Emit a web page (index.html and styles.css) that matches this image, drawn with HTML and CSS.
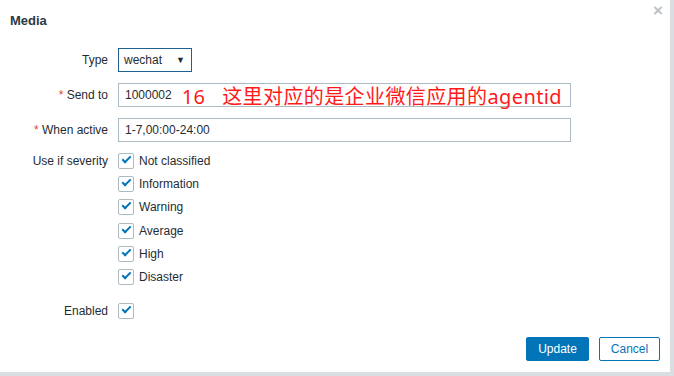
FILE: index.html
```html
<!DOCTYPE html>
<html lang="en">
<head>
  <meta charset="UTF-8">
  <title>Media</title>
  <link rel="stylesheet" href="styles.css">
</head>
<body>
  <div class="dialog">
    <div class="dialog-head">
      <h4>Media</h4>
      <span class="close">&times;</span>
    </div>

    <div class="form">
      <div class="row">
        <label>Type</label>
        <div class="select">wechat <span class="arrow">&#9660;</span></div>
      </div>
      <div class="row">
        <label><span class="req">*</span> Send to</label>
        <div class="input">1000002 <span class="note">16&nbsp;&nbsp;&nbsp;这里对应的是企业微信应用的agentid</span></div>
      </div>
      <div class="row">
        <label><span class="req">*</span> When active</label>
        <div class="input">1-7,00:00-24:00</div>
      </div>
      <div class="row top">
        <label>Use if severity</label>
        <ul class="checks">
          <li><span class="box"></span>Not classified</li>
          <li><span class="box"></span>Information</li>
          <li><span class="box"></span>Warning</li>
          <li><span class="box"></span>Average</li>
          <li><span class="box"></span>High</li>
          <li><span class="box"></span>Disaster</li>
        </ul>
      </div>
      <div class="row enabled">
        <label>Enabled</label>
        <span class="box"></span>
      </div>
    </div>

    <div class="buttons">
      <button class="primary">Update</button>
      <button class="secondary">Cancel</button>
    </div>
  </div>
</body>
</html>
```

FILE: styles.css
```css
body {
  margin: 0;
  background: #d9dee1;
  font-family: Arial, 'Liberation Sans', sans-serif;
  font-size: 12px;
  color: #1f2c33;
}

.dialog {
  width: 670px;
  height: 372px;
  background: white;
  position: relative;
}

.dialog-head {
  padding: 13px 10px 0;
  height: 32px;
  box-sizing: border-box;
}

.dialog-head h4 {
  margin: 0;
  font-size: 13px;
  font-weight: bold;
  color: #2b3a42;
}

.close {
  position: absolute;
  top: 1px;
  right: 7px;
  font-size: 17px;
  font-weight: bold;
  color: #b8c2c7;
}

.form {
  padding-top: 16px;
}

.row {
  display: flex;
  align-items: center;
  margin-bottom: 11px;
}

.row.top {
  align-items: flex-start;
  margin-top: 3px;
}

.row label {
  width: 108px;
  text-align: right;
  padding-right: 10px;
  flex-shrink: 0;
}

.row.top label {
  padding-top: 1px;
}

.req {
  color: #e0452f;
}

.select {
  width: 74px;
  height: 24px;
  box-sizing: border-box;
  border: 1px solid #1f5f8f;
  padding: 0 6px 0 5px;
  display: flex;
  align-items: center;
  justify-content: space-between;
}

.arrow {
  font-size: 9px;
}

.input {
  width: 453px;
  height: 24px;
  box-sizing: border-box;
  border: 1px solid #acbbc2;
  padding: 0 6px;
  display: flex;
  align-items: center;
}

.note {
  color: #ff1a1a;
  font-size: 20px;
  font-family: 'Noto Sans', 'Noto Sans CJK SC', sans-serif;
  margin-left: 10px;
  letter-spacing: 0.4px;
  white-space: nowrap;
}

.checks {
  list-style: none;
  margin: 0;
  padding: 0;
}

.checks li {
  display: flex;
  align-items: center;
  height: 16px;
  margin-bottom: 7.2px;
}

.box {
  width: 14px;
  height: 14px;
  border: 1px solid #acbbc2;
  border-radius: 2px;
  margin-right: 5px;
  position: relative;
  flex-shrink: 0;
}

.box::after {
  content: "";
  position: absolute;
  left: 3px;
  top: 2px;
  width: 7px;
  height: 3px;
  border-left: 2px solid #0275b8;
  border-bottom: 2px solid #0275b8;
  transform: rotate(-45deg);
}

.row.enabled {
  margin-top: 9px;
}

.buttons {
  position: absolute;
  right: 10px;
  bottom: 11px;
  display: flex;
  gap: 10px;
}

button {
  height: 24px;
  font-family: Arial, 'Liberation Sans', sans-serif;
  font-size: 12px;
  border-radius: 2px;
  padding: 0 10px;
  cursor: pointer;
}

.primary {
  background: #0275b8;
  border: 1px solid #0275b8;
  color: white;
  width: 63px;
}

.secondary {
  background: white;
  border: 1px solid #0275b8;
  color: #0275b8;
  width: 61px;
}
```
